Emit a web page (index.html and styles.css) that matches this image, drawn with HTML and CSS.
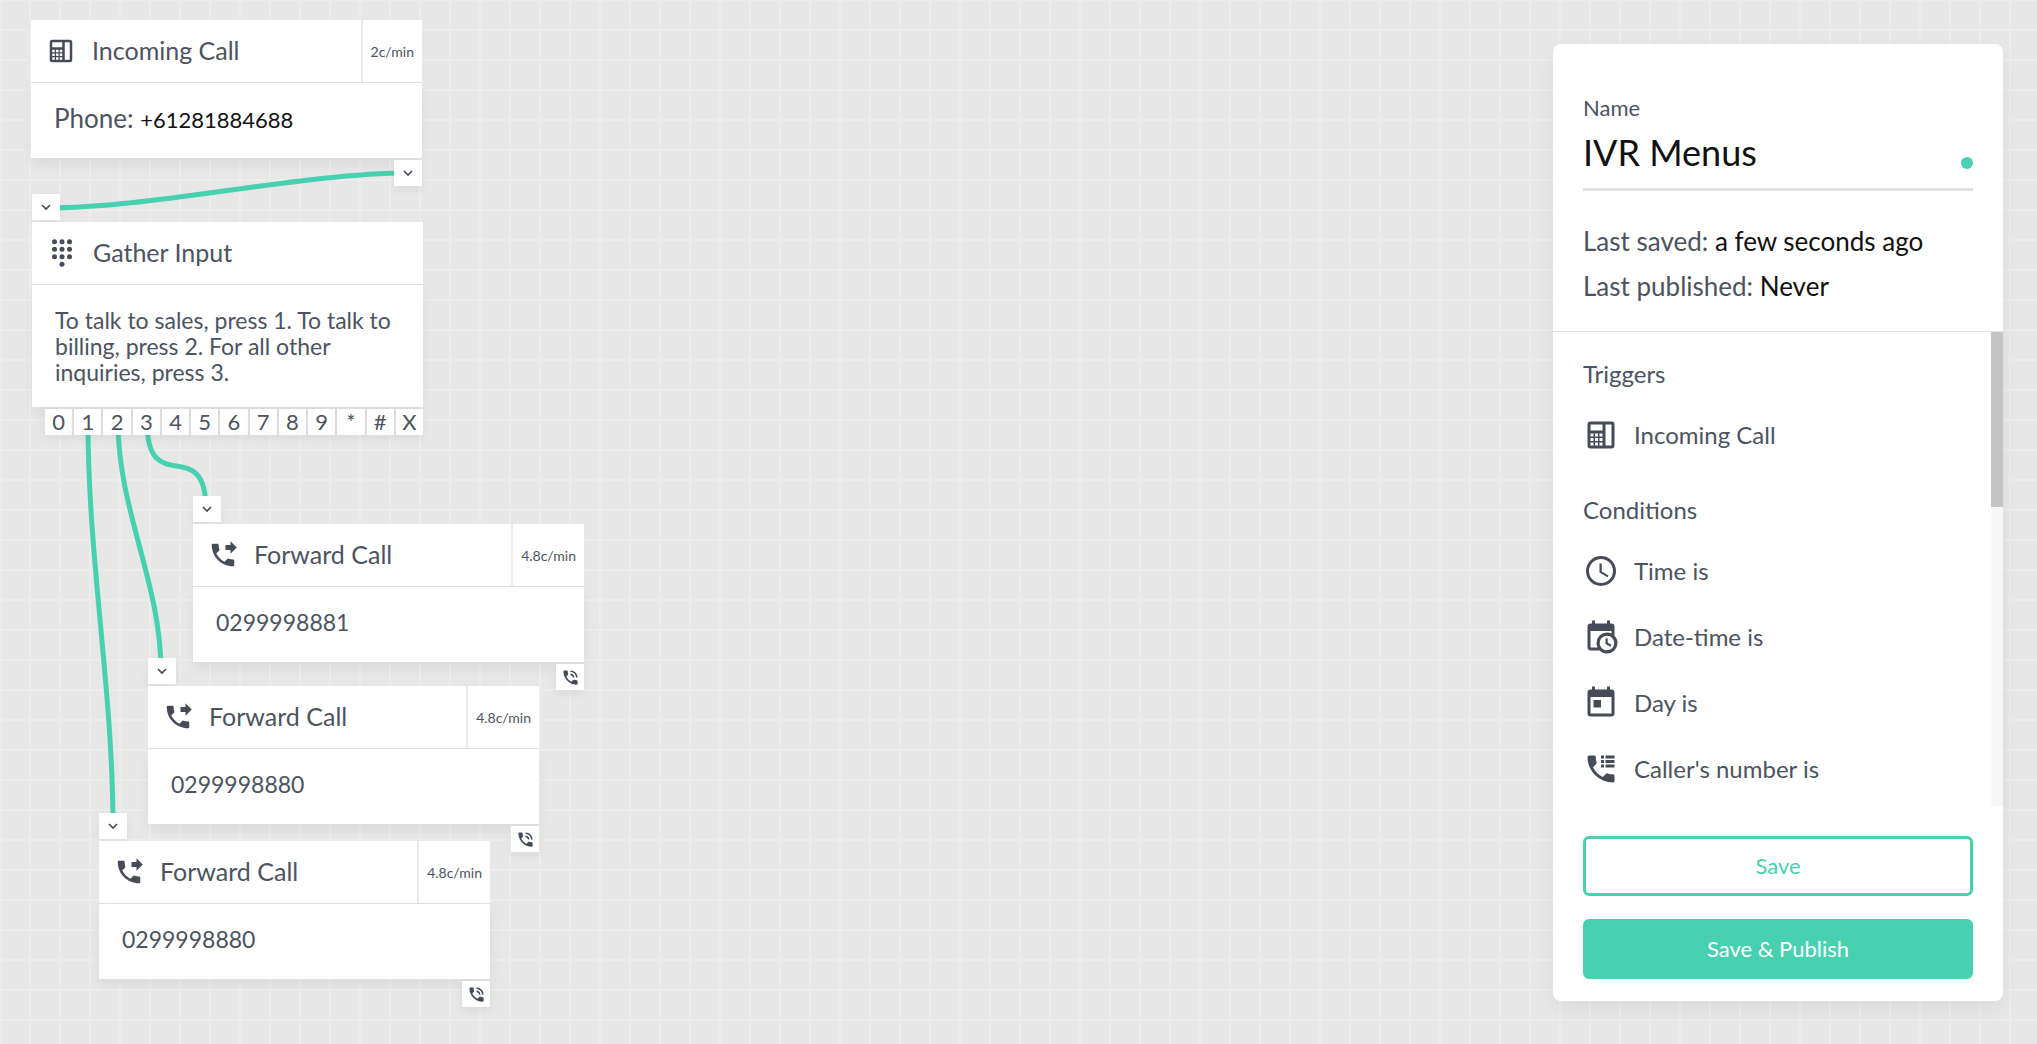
FILE: index.html
```html
<!DOCTYPE html>
<html lang="en">
<head>
    <meta charset="UTF-8">
    <meta name="viewport" content="width=device-width, initial-scale=1.0">
    <title>IVR Menus</title>
    <link rel="stylesheet" href="styles.css">
</head>
<body>
    <svg class="sprite" aria-hidden="true">
        <symbol id="deskphone" viewBox="0 0 24 24">
            <path fill-rule="evenodd" d="M5 3h14a2 2 0 0 1 2 2v14a2 2 0 0 1-2 2H5a2 2 0 0 1-2-2V5a2 2 0 0 1 2-2zM5 5v4h8V5zM15 5v14h4V5zM5 11v2h2v-2zM8 11v2h2v-2zM11 11v2h2v-2zM5 14v2h2v-2zM8 14v2h2v-2zM11 14v2h2v-2zM5 17v2h2v-2zM8 17v2h2v-2zM11 17v2h2v-2z"/>
        </symbol>
        <symbol id="dialpad" viewBox="0 0 24 24">
            <circle cx="6" cy="3" r="2"/><circle cx="12" cy="3" r="2"/><circle cx="18" cy="3" r="2"/>
            <circle cx="6" cy="9" r="2"/><circle cx="12" cy="9" r="2"/><circle cx="18" cy="9" r="2"/>
            <circle cx="6" cy="15" r="2"/><circle cx="12" cy="15" r="2"/><circle cx="18" cy="15" r="2"/>
            <circle cx="12" cy="21" r="2"/>
        </symbol>
        <symbol id="forward" viewBox="0 0 24 24">
            <path d="M18 11l5-5-5-5v3h-4v4h4v3zM20 15.500c-1.250 0-2.450-.2-3.570-.570-.350-.110-.740-.030-1.020.240l-2.200 2.200c-2.830-1.440-5.150-3.750-6.590-6.580l2.200-2.210c.280-.270.360-.660.250-1.010C8.700 6.450 8.500 5.250 8.500 4c0-.550-.450-1-1-1H4c-.550 0-1 .450-1 1 0 9.390 7.610 17 17 17 .550 0 1-.450 1-1v-3.500c0-.550-.450-1-1-1z"/>
        </symbol>
        <symbol id="talk" viewBox="0 0 24 24">
            <path d="M20 15.500c-1.250 0-2.450-.2-3.570-.570-.350-.110-.740-.030-1.020.240l-2.200 2.200c-2.830-1.440-5.150-3.750-6.590-6.580l2.200-2.210c.280-.270.360-.660.250-1.010C8.700 6.450 8.500 5.250 8.500 4c0-.550-.450-1-1-1H4c-.550 0-1 .450-1 1 0 9.390 7.610 17 17 17 .550 0 1-.450 1-1v-3.500c0-.550-.450-1-1-1zM19 12h2c0-4.970-4.030-9-9-9v2c3.870 0 7 3.130 7 7zM15 12h2c0-2.760-2.240-5-5-5v2c1.660 0 3 1.340 3 3z"/>
        </symbol>
        <symbol id="clock" viewBox="0 0 24 24">
            <path d="M12 2a10 10 0 1 0 0 20 10 10 0 0 0 0-20zm0 18a8 8 0 1 1 0-16 8 8 0 0 1 0 16zM12.500 7H11v6l5.250 3.150.750-1.230-4.500-2.670z"/>
        </symbol>
        <symbol id="calendar-clock" viewBox="0 0 24 24">
            <path d="M15,13H16.5V15.82L18.94,17.23L18.19,18.53L15,16.69V13M19,8H5V19H9.67C9.24,18.09 9,17.07 9,16A7,7 0 0,1 16,9C17.07,9 18.09,9.24 19,9.67V8M5,21C3.89,21 3,20.1 3,19V5C3,3.89 3.89,3 5,3H6V1H8V3H16V1H18V3H19A2,2 0 0,1 21,5V11.1C22.24,12.36 23,14.09 23,16A7,7 0 0,1 16,23C14.09,23 12.36,22.24 11.1,21H5M16,11.15A4.85,4.85 0 0,0 11.15,16C11.15,18.68 13.32,20.85 16,20.85A4.85,4.85 0 0,0 20.85,16C20.85,13.32 18.68,11.15 16,11.15Z"/>
        </symbol>
        <symbol id="calendar" viewBox="0 0 24 24">
            <path d="M19 3h-1V1h-2v2H8V1H6v2H5a2 2 0 0 0-2 2v14a2 2 0 0 0 2 2h14a2 2 0 0 0 2-2V5a2 2 0 0 0-2-2zm0 16H5V8h14v11zM7 10h5v5H7z"/>
        </symbol>
        <symbol id="phone-log" viewBox="0 0 24 24">
            <path d="M20,15.5A1,1 0 0,1 21,16.5V20A1,1 0 0,1 20,21A17,17 0 0,1 3,4A1,1 0 0,1 4,3H7.5A1,1 0 0,1 8.5,4C8.5,5.24 8.7,6.45 9.07,7.57C9.18,7.92 9.1,8.31 8.82,8.59L6.62,10.79C8.06,13.62 10.38,15.94 13.21,17.38L15.41,15.18C15.69,14.9 16.08,14.82 16.43,14.93C17.55,15.3 18.76,15.5 20,15.5M12 3h2v2h-2zM15 3h6v2h-6zM12 6h2v2h-2zM15 6h6v2h-6zM12 9h2v2h-2zM15 9h6v2h-6z"/>
        </symbol>
        <symbol id="chevron" viewBox="0 0 12 12">
            <path d="M2 4l4 4 4-4" fill="none" stroke="currentColor" stroke-width="1.7"/>
        </symbol>
    </svg>

    <main class="canvas">
        <svg class="links" aria-hidden="true">
            <path d="M409 173C300 173 155 208 46 208"/>
            <path d="M88 422C88 560 113 690 113 827"/>
            <path d="M118 422C118 510 161 583 161 671"/>
            <path d="M147 422C147 500 206 432 206 510"/>
        </svg>

        <section class="node node-incoming">
            <header>
                <svg class="icon"><use href="#deskphone"/></svg>
                <h2>Incoming Call</h2>
                <span class="cost">2c/min</span>
            </header>
            <div class="node-body phone">Phone: <b>+61281884688</b></div>
            <div class="ports">
                <button class="port" aria-label="Next"><svg class="chevron"><use href="#chevron"/></svg></button>
            </div>
        </section>

        <section class="node node-gather">
            <button class="port port-in" aria-label="Input"><svg class="chevron"><use href="#chevron"/></svg></button>
            <header>
                <svg class="icon"><use href="#dialpad"/></svg>
                <h2>Gather Input</h2>
            </header>
            <div class="node-body">To talk to sales, press 1. To talk to billing, press 2. For all other inquiries, press 3.</div>
            <div class="ports keys">
                <button class="port">0</button>
                <button class="port">1</button>
                <button class="port">2</button>
                <button class="port">3</button>
                <button class="port">4</button>
                <button class="port">5</button>
                <button class="port">6</button>
                <button class="port">7</button>
                <button class="port">8</button>
                <button class="port">9</button>
                <button class="port">*</button>
                <button class="port">#</button>
                <button class="port">X</button>
            </div>
        </section>

        <section class="node node-other">
            <button class="port port-in" aria-label="Input"><svg class="chevron"><use href="#chevron"/></svg></button>
            <header>
                <svg class="icon"><use href="#forward"/></svg>
                <h2>Forward Call</h2>
                <span class="cost">4.8c/min</span>
            </header>
            <div class="node-body">0299998881</div>
            <div class="ports">
                <button class="port" aria-label="After call"><svg class="talk"><use href="#talk"/></svg></button>
            </div>
        </section>

        <section class="node node-billing">
            <button class="port port-in" aria-label="Input"><svg class="chevron"><use href="#chevron"/></svg></button>
            <header>
                <svg class="icon"><use href="#forward"/></svg>
                <h2>Forward Call</h2>
                <span class="cost">4.8c/min</span>
            </header>
            <div class="node-body">0299998880</div>
            <div class="ports">
                <button class="port" aria-label="After call"><svg class="talk"><use href="#talk"/></svg></button>
            </div>
        </section>

        <section class="node node-sales">
            <button class="port port-in" aria-label="Input"><svg class="chevron"><use href="#chevron"/></svg></button>
            <header>
                <svg class="icon"><use href="#forward"/></svg>
                <h2>Forward Call</h2>
                <span class="cost">4.8c/min</span>
            </header>
            <div class="node-body">0299998880</div>
            <div class="ports">
                <button class="port" aria-label="After call"><svg class="talk"><use href="#talk"/></svg></button>
            </div>
        </section>
    </main>

    <aside class="panel">
        <div class="summary">
            <label for="name">Name</label>
            <div class="name-field">
                <input type="text" id="name" value="IVR Menus">
                <span class="status"></span>
            </div>
            <p>Last saved: <b>a few seconds ago</b></p>
            <p>Last published: <b>Never</b></p>
        </div>
        <div class="palette">
            <div class="palette-list">
                <h3>Triggers</h3>
                <ul>
                    <li><svg><use href="#deskphone"/></svg><span>Incoming Call</span></li>
                </ul>
                <h3>Conditions</h3>
                <ul>
                    <li><svg><use href="#clock"/></svg><span>Time is</span></li>
                    <li><svg><use href="#calendar-clock"/></svg><span>Date-time is</span></li>
                    <li><svg><use href="#calendar"/></svg><span>Day is</span></li>
                    <li><svg><use href="#phone-log"/></svg><span>Caller's number is</span></li>
                </ul>
            </div>
            <div class="scrollbar"><div class="thumb"></div></div>
        </div>
        <div class="actions">
            <button class="save">Save</button>
            <button class="publish">Save &amp; Publish</button>
        </div>
    </aside>
</body>
</html>
```
FILE: styles.css
```css
* {
    box-sizing: border-box;
}
body {
    margin: 0;
    height: 100vh;
    overflow: hidden;
    display: flex;
    justify-content: flex-end;
    padding: 44px 34px 43px;
    font-family: Lato, sans-serif;
    color: #4c535f;
    background-color: #e7e7e7;
    background-image:
        linear-gradient(#ececec 2px, transparent 2px),
        linear-gradient(90deg, #ececec 2px, transparent 2px);
    background-size: 30px 30px;
    background-position: -1px -1px;
}
h2, h3, p, ul {
    margin: 0;
    padding: 0;
    font-weight: 400;
}
b {
    font-weight: 400;
    color: #111;
}
button, input {
    font-family: inherit;
    padding: 0;
    border: 0;
}
svg {
    fill: currentColor;
    color: #454c58;
    flex: none;
}
.sprite {
    position: absolute;
    width: 0;
    height: 0;
}

/* flow canvas */
.canvas {
    position: absolute;
    inset: 0;
}
.links {
    position: absolute;
    width: 100%;
    height: 100%;
}
.links path {
    fill: none;
    stroke: #48d1b0;
    stroke-width: 5;
}
.node {
    position: absolute;
    width: 391px;
    display: flex;
    flex-direction: column;
}
.node-incoming {
    left: 31px;
    top: 20px;
}
.node-gather {
    left: 32px;
    top: 194px;
}
.node-other {
    left: 193px;
    top: 496px;
}
.node-billing {
    left: 148px;
    top: 658px;
}
.node-sales {
    left: 99px;
    top: 813px;
}
.node header {
    display: flex;
    align-items: center;
    height: 63px;
    padding-left: 15px;
    background: #fff;
    border-bottom: 1px solid #e2e2e2;
}
.icon {
    width: 30px;
    height: 30px;
}
.node h2 {
    flex: 1;
    margin-left: 16px;
    padding-bottom: 2px;
    font-size: 25px;
}
.cost {
    align-self: stretch;
    display: flex;
    align-items: center;
    padding: 0 8px;
    border-left: 2px solid #ebebeb;
    font-size: 14px;
}
.node-body {
    min-height: 75px;
    padding: 22px 23px;
    background: #fff;
    box-shadow: 0 6px 12px rgba(0, 0, 0, 0.06);
    font-size: 23px;
    line-height: 26px;
}
.node-body.phone {
    font-size: 26px;
}
.node-body.phone b {
    font-size: 22px;
}
.port {
    width: 28px;
    height: 26px;
    display: flex;
    align-items: center;
    justify-content: center;
    background: #fff;
    color: inherit;
    font-size: 22px;
    box-shadow: 0 4px 10px rgba(0, 0, 0, 0.06);
}
.port-in {
    margin-bottom: 2px;
}
.ports {
    display: flex;
    justify-content: flex-end;
    margin-top: 2px;
}
.keys {
    gap: 2px;
    margin-left: 13px;
}
.keys .port {
    flex: 1;
    padding-bottom: 2px;
}
.chevron {
    width: 12px;
    height: 12px;
}
.talk {
    width: 19px;
    height: 19px;
}

/* side panel */
.panel {
    position: relative;
    width: 450px;
    display: flex;
    flex-direction: column;
    background: #fff;
    border-radius: 8px;
    box-shadow: 0 8px 24px rgba(0, 0, 0, 0.06);
}
.summary {
    padding: 50px 30px 22px;
    border-bottom: 1px solid #e2e2e2;
}
.summary label {
    display: block;
    font-size: 22px;
    line-height: 28px;
}
.name-field {
    display: flex;
    align-items: center;
    height: 69px;
    margin-bottom: 28px;
    border-bottom: 3px solid #e2e2e2;
}
.name-field input {
    flex: 1;
    min-width: 0;
    height: 60px;
    padding-bottom: 6px;
    font-size: 36px;
    color: #111;
    background: none;
}
.status {
    width: 12px;
    height: 12px;
    margin-top: 16px;
    border-radius: 50%;
    background: #48d1b0;
}
.summary p {
    font-size: 26px;
    line-height: 45px;
}
.palette {
    flex: 1;
    min-height: 0;
    display: flex;
}
.palette-list {
    flex: 1;
    padding: 0 30px;
    overflow: hidden;
}
.palette h3 {
    padding: 28px 0 14px;
    font-size: 24px;
    line-height: 28px;
}
.palette li {
    display: flex;
    align-items: center;
    gap: 15px;
    height: 66px;
    font-size: 24px;
}
.palette li span {
    padding-bottom: 2px;
}
.palette li svg {
    width: 36px;
    height: 36px;
}
.scrollbar {
    width: 12px;
    background: #f7f7f7;
}
.thumb {
    height: 37%;
    background: #c4c4c4;
}
.actions {
    display: flex;
    flex-direction: column;
    gap: 23px;
    padding: 30px 30px 22px;
}
.actions button {
    height: 60px;
    padding-bottom: 2px;
    border: 3px solid #48d1b0;
    border-radius: 6px;
    font-size: 22px;
}
.actions .save {
    background: #fff;
    color: #48d1b0;
}
.actions .publish {
    background: #48d1b0;
    color: #fff;
}
```
